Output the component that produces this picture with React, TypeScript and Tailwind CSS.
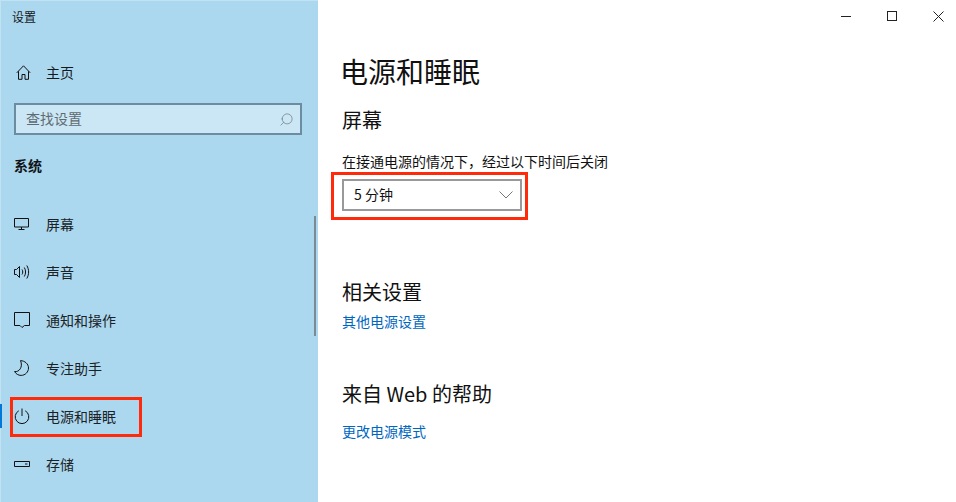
import { Search } from "lucide-react";
import type { ReactNode } from "react";

const FONT = "font-['Noto_Sans_CJK_SC','Liberation_Sans',sans-serif]";

function Home() {
  return (
    <svg width="15" height="15" viewBox="0 0 15 15" fill="none" stroke="#111" strokeWidth="1">
      <path d="M.8 7.800 7.500.8l6.700 7M2.500 6.300v8h3.500V9.500h3v4.800h3.500v-8" />
    </svg>
  );
}

function Monitor() {
  return (
    <svg width="16" height="16" viewBox="0 0 16 16" fill="none" stroke="#111" strokeWidth="1">
      <path d="M.5 2.500h14v8.500H.5zM7.500 11v2.500M4.500 13.500h6" />
    </svg>
  );
}

function Speaker() {
  return (
    <svg width="16" height="16" viewBox="0 0 16 16" fill="none" stroke="#111" strokeWidth="1">
      <path d="M.5 5.500v5h2l3 3v-11l-3 3z" />
      <path d="M8 5.500c1 1.500 1 3.500 0 5M10.300 3.500c1.700 2.700 1.700 6.300 0 9M12.800 1.500c2.400 4 2.400 9 0 13" />
    </svg>
  );
}

function Notice() {
  return (
    <svg width="16" height="16" viewBox="0 0 16 16" fill="none" stroke="#111" strokeWidth="1">
      <path d="M.5.5h15v13h-5L8 15.500 6 13.500H.5z" />
    </svg>
  );
}

function Moon() {
  return (
    <svg width="16" height="16" viewBox="0 0 16 16" fill="none" stroke="#111" strokeWidth="1">
      <path d="M6.500.6c4.300.2 8 3.200 8 7.400 0 4-3.300 7.400-7.400 7.400-2.800 0-5.300-1.500-6.500-3.900C5 12.500 9.300 7 6.500.6z" />
    </svg>
  );
}

function Power() {
  return (
    <svg width="16" height="16" viewBox="0 0 16 16" fill="none" stroke="#111" strokeWidth="1">
      <path d="M8 .5v7.500M4.800 2.800a6.800 6.800 0 1 0 6.400 0" />
    </svg>
  );
}

function Storage() {
  return (
    <svg width="16" height="16" viewBox="0 0 16 16" fill="none" stroke="#111" strokeWidth="1">
      <path d="M.5 5.500h15v5H.5zM11 8h2.500" />
    </svg>
  );
}

function NavItem({ icon, label, marked }: { icon: ReactNode; label: string; marked?: boolean }) {
  return (
    <div className="relative flex h-12 items-center pl-[13px] text-sm text-[#1b2226]">
      <span className="flex w-8 shrink-0">{icon}</span>
      <span>{label}</span>
      {marked && (
        <>
          <span className="absolute -left-px top-3 h-6 w-[2px] bg-[#0078d7]" />
          <span className="absolute left-[9px] top-[5px] h-[40px] w-[132px] border-[3px] border-[#ff2a0a]" />
        </>
      )}
    </div>
  );
}

export default function App() {
  return (
    <div className={`flex h-[502px] w-[956px] overflow-hidden bg-white ${FONT}`}>
      <aside className="relative flex h-full w-[318px] shrink-0 flex-col border-l border-t border-[#c0e2f3] bg-[#acd8ef]">
        <div className="flex h-[31px] items-center pl-[11px] text-xs text-[#14191c]">设置</div>
        <div className="mt-[16px] flex h-12 items-center pl-[15px] text-sm text-[#14191c]">
          <span className="flex w-[30px] shrink-0">
            <Home />
          </span>
          <span>主页</span>
        </div>
        <div className="ml-[13px] mt-[7px] flex h-[32px] w-[288px] items-center justify-between border-2 border-[#6c8c9f] bg-[#cbe7f5] pl-[10px] pr-[6px] text-sm text-[#5f6b72]">
          <span className="mb-[2px]">查找设置</span>
          <Search size={15} strokeWidth={1} className="-scale-x-100 text-[#5f6b72]" />
        </div>
        <div className="mt-[20px] h-[20px] pl-[13px] text-sm leading-5 font-bold text-[#101518]">系统</div>
        <nav className="mt-[25px] flex flex-col">
          <NavItem icon={<Monitor />} label="屏幕" />
          <NavItem icon={<Speaker />} label="声音" />
          <NavItem icon={<Notice />} label="通知和操作" />
          <NavItem icon={<Moon />} label="专注助手" />
          <NavItem icon={<Power />} label="电源和睡眠" marked />
          <NavItem icon={<Storage />} label="存储" />
        </nav>
        <span className="absolute right-[2px] top-[215px] h-[120px] w-[2px] bg-[#7b8a93]" />
      </aside>

      <main className="relative flex-1 pl-[24px] text-[#111]">
        <div className="absolute -right-[5px] top-0 flex text-[#222]">
          <div className="flex h-8 w-[46px] items-center justify-center">
            <span className="h-px w-[10px] bg-[#222]" />
          </div>
          <div className="flex h-8 w-[46px] items-center justify-center">
            <span className="h-[10px] w-[10px] border border-[#222]" />
          </div>
          <div className="flex h-8 w-[46px] items-center justify-center">
            <svg width="11" height="11" viewBox="0 0 11 11" stroke="#222" strokeWidth="1">
              <path d="M.5.5l10 10M10.500.5l-10 10" />
            </svg>
          </div>
        </div>

        <h1 className="-ml-[2px] mt-[50px] h-[42px] text-[28px] leading-[42px] font-normal">电源和睡眠</h1>
        <h2 className="mt-[13px] h-[30px] text-xl leading-[30px] font-normal">屏幕</h2>
        <p className="mt-[16px] h-5 text-sm leading-5">{"在接通电源的情况下\uFF0C经过以下时间后关闭"}</p>
        <div className="relative mt-[8px] flex h-[32px] w-[180px] items-center justify-between border-2 border-[#999] pl-[10px] pr-[7px] text-sm">
          <span className="mb-[2px]">5 分钟</span>
          <svg width="14" height="8" viewBox="0 0 14 8" fill="none" stroke="#777" strokeWidth="1">
            <path d="M.5.5 7 7l6.500-6.500" />
          </svg>
          <span className="absolute -left-[13px] -top-[9px] h-[48px] w-[197px] border-[3px] border-[#ff2a0a]" />
        </div>
        <h2 className="mt-[66px] h-[30px] text-xl leading-[30px] font-normal">相关设置</h2>
        <a className="mt-[4px] block h-5 text-sm leading-5 text-[#0067c0]">其他电源设置</a>
        <h2 className="mt-[48px] h-[30px] text-xl leading-[30px] font-normal">来自 Web 的帮助</h2>
        <a className="mt-[12px] block h-5 text-sm leading-5 text-[#0067c0]">更改电源模式</a>
      </main>
    </div>
  );
}
